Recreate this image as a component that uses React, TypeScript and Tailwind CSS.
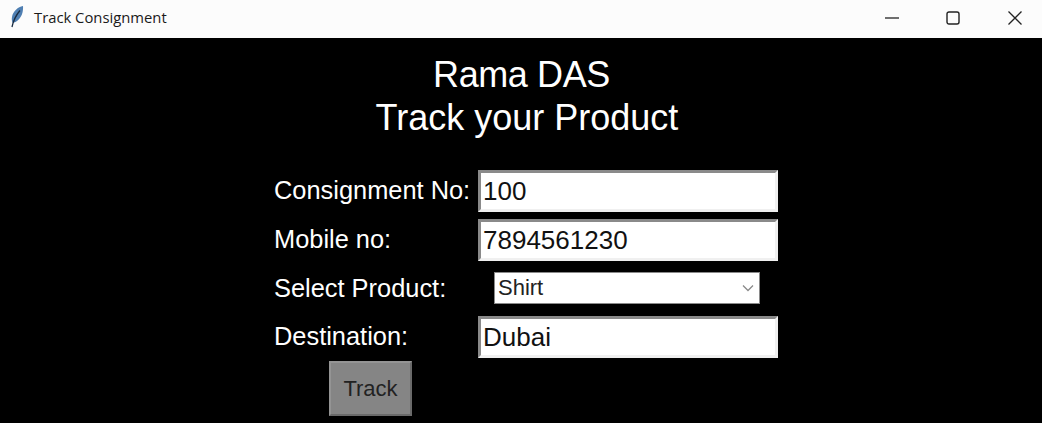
import React from 'react';

const Field = ({ label, value }: { label: string; value: string }) => (
    <div className="flex items-center h-[42px] mb-[7px]">
        <span className="w-[204px] text-[25.4px] text-white leading-none">{label}</span>
        <div className="w-[300px] h-[42px] bg-white border-[3px] border-t-[#8a8a8a] border-l-[#8a8a8a] border-r-[#f0f0f0] border-b-[#f0f0f0] pl-[2px] flex items-center text-[26px] text-[#111] leading-none">
            {value}
        </div>
    </div>
);

const App: React.FC = () => {
    return (
        <div className="w-[1042px] h-[423px] bg-black overflow-hidden flex flex-col font-['Liberation_Sans',Arial,sans-serif]">
            <div className="h-[38px] shrink-0 bg-[#fcfcfc] flex items-center font-['Open_Sans',sans-serif]">
                <svg className="ml-[10px] mb-[4px]" width="14" height="22" viewBox="0 0 14 22">
                    <path d="M13 0C8 1 3 5 2 11c-.4 2.200-.2 4 .6 5.800C6.500 16.500 11 12.500 12.500 6.500 13 4.500 13.200 2 13 0z" fill="#4f7fb2" />
                    <path d="M10 4.500C6.500 8.500 3.500 14 2 21" stroke="#1b2d42" strokeWidth="1.300" fill="none" />
                </svg>
                <span className="ml-[10px] pb-[3px] text-[14.800px] text-[#1a1a1a]">Track Consignment</span>
                <div className="ml-auto pr-[20px] pb-[3px] flex items-center gap-[46px]">
                    <svg className="mr-[1px]" width="14" height="14" viewBox="0 0 14 14"><path d="M0 7h14" stroke="#222" strokeWidth="1.300" /></svg>
                    <svg className="mr-[2px]" width="14" height="14" viewBox="0 0 14 14"><rect x="1" y="1" width="12" height="12" rx="2" fill="none" stroke="#222" strokeWidth="1.400" /></svg>
                    <svg width="14" height="14" viewBox="0 0 14 14"><path d="M.5.5l13 13M13.500.5l-13 13" stroke="#222" strokeWidth="1.300" /></svg>
                </div>
            </div>

            <div className="pl-[274px]">
                <div className="w-[506px] pt-[16px] text-center text-[36px] leading-[42px] text-white">
                    <div className="pr-[11px] tracking-[-0.4px]">Rama DAS</div>
                    <div className="mt-[1px]">Track your Product</div>
                </div>

                <div className="mt-[31px]">
                    <Field label="Consignment No:" value="100" />
                    <Field label="Mobile no:" value="7894561230" />

                    <div className="flex items-center h-[42px] mb-[6px]">
                        <span className="w-[220px] text-[25.4px] text-white leading-none">Select Product:</span>
                        <div className="w-[266px] h-[32px] mb-[3px] bg-white border border-[#8a8a8a] pl-[3px] pr-[5px] flex items-center justify-between text-[22px] text-[#222] leading-none">
                            Shirt
                            <svg width="12" height="8" viewBox="0 0 12 8"><path d="M1 1.500l5 5 5-5" fill="none" stroke="#8a8a8a" strokeWidth="1.300" /></svg>
                        </div>
                    </div>

                    <Field label="Destination:" value="Dubai" />
                </div>

                <button className="-mt-[4px] ml-[55px] w-[83px] h-[55px] bg-[#858585] border-2 border-t-[#949494] border-l-[#949494] border-r-[#6a6a6a] border-b-[#6a6a6a] text-[22px] text-[#222] flex items-center justify-center leading-none">
                    Track
                </button>
            </div>
        </div>
    );
};

export default App;
